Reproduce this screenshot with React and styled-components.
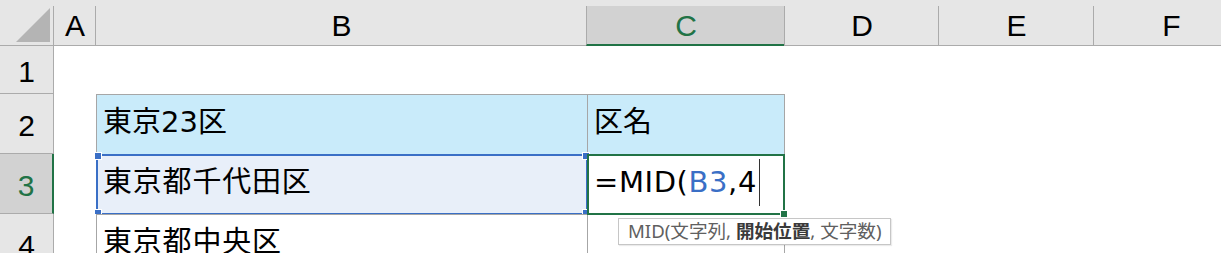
import React from 'react'
import styled, { createGlobalStyle } from 'styled-components'

const GlobalStyle = createGlobalStyle`
  * { box-sizing: border-box; }
  body {
    margin: 0;
    background: #fff;
    font-family: "DejaVu Sans", "Noto Sans CJK JP", sans-serif;
  }
`

const HEAD_BG = '#e6e6e6'
const HEAD_ACTIVE = '#d2d2d2'
const HEAD_LINE = '#ababab'
const GREEN = '#217346'
const BLUE = '#3a6fc6'
const TABLE_LINE = '#a6a6a6'

const Sheet = styled.div`
  display: grid;
  grid-template-columns: 54px 42px 491px 198px 154px 155px 155px;
  grid-template-rows: 46px 48px 60px 60px 60px;
  width: 1221px;
  height: 253px;
  overflow: hidden;
  background: #fff;
`

const Corner = styled.div`
  display: flex;
  align-items: flex-end;
  justify-content: flex-end;
  padding: 0 3px 3px 0;
  background: ${HEAD_BG};
  border-right: 1px solid ${HEAD_LINE};
  border-bottom: 1px solid ${HEAD_LINE};
`

const ColHead = styled.div`
  padding-top: 6px;
  background: ${HEAD_BG};
  margin-left: -1px;
`

const ColLabel = styled.div`
  height: 100%;
  display: flex;
  align-items: center;
  justify-content: center;
  font-family: "Liberation Sans", sans-serif;
  font-size: 30px;
  color: ${(p) => (p.$active ? GREEN : '#000')};
  background: ${(p) => (p.$active ? HEAD_ACTIVE : 'transparent')};
  border-left: 1px solid ${HEAD_LINE};
  border-bottom: ${(p) => (p.$active ? `2px solid ${GREEN}` : `1px solid ${HEAD_LINE}`)};
  padding-top: ${(p) => (p.$active ? '1px' : '0')};
`

const RowHead = styled.div`
  display: flex;
  align-items: center;
  justify-content: center;
  padding-top: 4px;
  font-family: "Liberation Sans", sans-serif;
  font-size: 30px;
  color: ${(p) => (p.$active ? GREEN : '#000')};
  background: ${(p) => (p.$active ? HEAD_ACTIVE : HEAD_BG)};
  border-bottom: 1px solid ${HEAD_LINE};
  border-right: ${(p) => (p.$active ? `2px solid ${GREEN}` : `1px solid ${HEAD_LINE}`)};
`

const Cell = styled.div`
  position: relative;
  display: flex;
  align-items: center;
  padding: 0 0 4px 6px;
  font-size: 29px;
  line-height: 1;
  color: #000;
  white-space: nowrap;
  background: ${(p) => p.$fill || '#fff'};
  border-top: ${(p) => (p.$table ? `1px solid ${TABLE_LINE}` : 'none')};
  border-left: ${(p) => (p.$table ? `1px solid ${TABLE_LINE}` : 'none')};
  border-right: ${(p) => (p.$last ? `1px solid ${TABLE_LINE}` : 'none')};
`

const Wide = styled.span`
  letter-spacing: 0.8px;
`

const RefBox = styled.div`
  position: absolute;
  left: -1px;
  top: -1px;
  right: -1px;
  bottom: -1px;
  border: 2px solid ${BLUE};
  pointer-events: none;
`

const Handle = styled.span`
  position: absolute;
  width: 6px;
  height: 6px;
  background: ${BLUE};
  outline: 1px solid #fff;
  ${(p) => (p.$top ? 'top: -3px;' : 'bottom: -3px;')}
  ${(p) => (p.$left ? 'left: -3px;' : 'right: -3px;')}
`

const ActiveBox = styled.div`
  position: absolute;
  left: -1px;
  top: -1px;
  right: -1px;
  bottom: -1px;
  border: 2px solid ${GREEN};
  pointer-events: none;
  z-index: 2;
`

const FillHandle = styled.span`
  position: absolute;
  right: -4px;
  bottom: -4px;
  width: 6px;
  height: 6px;
  background: ${GREEN};
  outline: 1px solid #fff;
`

const Ref = styled.span`
  color: ${BLUE};
`

const Caret = styled.span`
  display: inline-block;
  width: 1px;
  height: 47px;
  margin-left: 2px;
  background: #333;
  vertical-align: middle;
`

const Formula = styled.span`
  display: inline-flex;
  align-items: center;
  letter-spacing: 0.6px;
`

const Tip = styled.div`
  position: absolute;
  left: 30px;
  top: 63px;
  z-index: 3;
  display: flex;
  align-items: center;
  height: 27px;
  padding: 0 8px 0 9px;
  background: #fff;
  border: 1px solid #c6c6c6;
  box-shadow: 1px 1px 1px rgba(0, 0, 0, 0.08);
  font-family: "Noto Sans", "Noto Sans CJK JP", sans-serif;
  font-size: 18.6px;
  line-height: 1;
  color: #606060;
  white-space: nowrap;
`

const TipArg = styled.b`
  color: #3a3a3a;
  font-weight: 700;
`

const cols = ['A', 'B', 'C', 'D', 'E', 'F']

function Triangle() {
  return (
    <svg width="34" height="34" viewBox="0 0 34 34">
      <polygon points="34,0 34,34 0,34" fill="#b4b4b4" />
    </svg>
  )
}

export default function App() {
  return (
    <>
      <GlobalStyle />
      <Sheet>
        <Corner>
          <Triangle />
        </Corner>
        {cols.map((c) => (
          <ColHead key={c}>
            <ColLabel $active={c === 'C'}>{c}</ColLabel>
          </ColHead>
        ))}

        <RowHead>1</RowHead>
        <Cell />
        <Cell />
        <Cell />
        <Cell />
        <Cell />
        <Cell />

        <RowHead>2</RowHead>
        <Cell />
        <Cell $table $fill="#c9ebfa">東京23区</Cell>
        <Cell $table $last $fill="#c9ebfa">区名</Cell>
        <Cell />
        <Cell />
        <Cell />

        <RowHead $active>3</RowHead>
        <Cell />
        <Cell $table $fill="#e8eff9">
          <Wide>東京都千代田区</Wide>
          <RefBox>
            <Handle $top $left />
            <Handle $top />
            <Handle $left />
            <Handle />
          </RefBox>
        </Cell>
        <Cell $table $last>
          <Formula>
            =MID(<Ref>B3</Ref>,4<Caret />
          </Formula>
          <ActiveBox>
            <FillHandle />
          </ActiveBox>
          <Tip>
            MID(文字列,&nbsp;<TipArg>開始位置</TipArg>,&nbsp;文字数)
          </Tip>
        </Cell>
        <Cell />
        <Cell />
        <Cell />

        <RowHead>4</RowHead>
        <Cell />
        <Cell $table>
          <Wide>東京都中央区</Wide>
        </Cell>
        <Cell $table $last />
        <Cell />
        <Cell />
        <Cell />
      </Sheet>
    </>
  )
}
